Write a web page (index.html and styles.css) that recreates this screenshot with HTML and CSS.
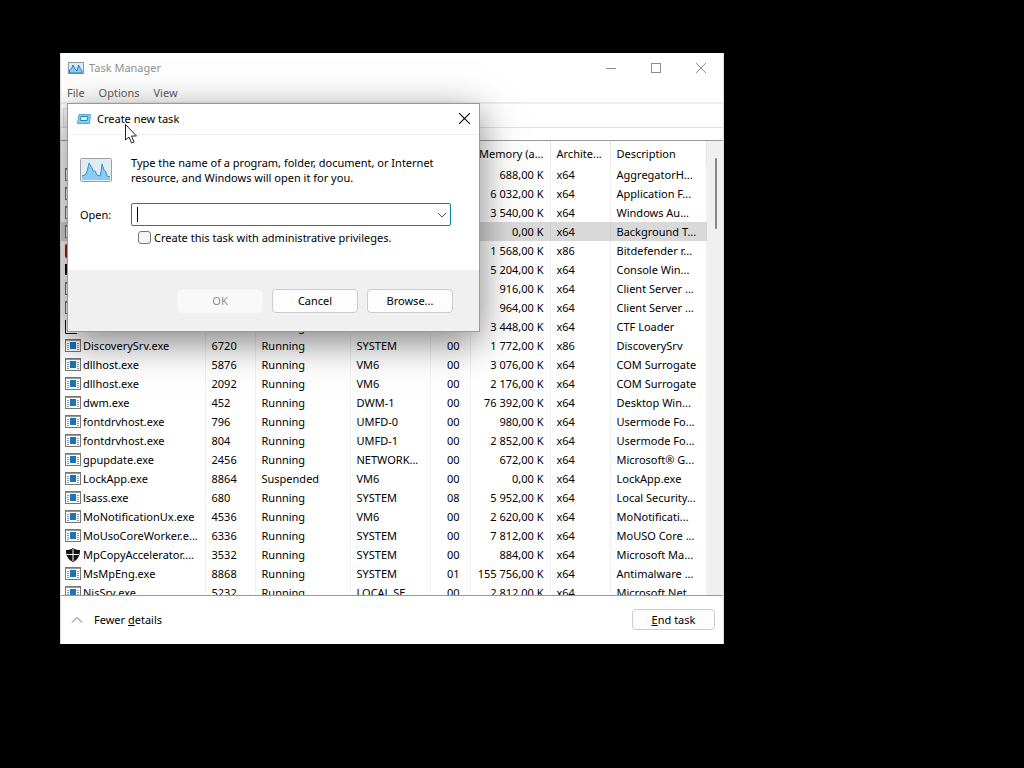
FILE: index.html
```html
<!DOCTYPE html>
<html lang="en">

<head>
	<meta charset="utf-8">
	<title>Task Manager</title>
	<link rel="stylesheet" href="styles.css">
</head>

<body>
	<!-- shared icons -->
	<svg class="defs" aria-hidden="true">
		<symbol id="exe" viewBox="0 0 16 14">
			<rect x="0.5" y="0.5" width="15" height="12" fill="#fff" stroke="#777" />
			<path d="M1 1.5h14" stroke="#999" />
			<path d="M2 4.5h2M2 6.5h2M2 8.5h2M2 10.5h2M12 4.5h2M12 6.5h2M12 8.5h2M12 10.5h2" stroke="#8a9aa8" />
			<rect x="5" y="3" width="6" height="7" fill="#1c74b8" />
		</symbol>
		<symbol id="shield" viewBox="0 0 16 14">
			<path d="M8 0C6 1.500 4 2 1 2C1 8 3 11.500 8 14C13 11.500 15 8 15 2C12 2 10 1.500 8 0z" fill="#111" />
			<path d="M8 1v12M2 6.500h12" stroke="#fff" />
		</symbol>
		<symbol id="graph" viewBox="0 0 32 24">
			<rect x="0.500" y="0.500" width="31" height="23" rx="1" fill="#e2ebf0" stroke="#9aa2a8" />
			<path d="M2 22v-4l3-1 2-3 2-9 3 5 1 3 2 0 2 4 3 1 1-4 1-8 2 6 2 2 1 4 3 1v3z" fill="#8bcbf5" />
			<path d="M2 18l3-1 2-3 2-9 3 5 1 3 2 0 2 4 3 1 1-4 1-8 2 6 2 2 1 4 3 1" fill="none" stroke="#2f92d6" />
		</symbol>
		<symbol id="graph-small" viewBox="0 0 16 12">
			<rect x="0.500" y="0.500" width="15" height="11" fill="#d8ebf6" stroke="#8c9aa3" />
			<path d="M1.500 11V8l2-1 1.500-4 2 4 2 2 1.500-6 1.500 3 2 3v2z" fill="#8bcbf5" stroke="#2580c4" />
		</symbol>
		<symbol id="cross" viewBox="0 0 12 12">
			<path d="M1 1l10 10M11 1L1 11" stroke="currentColor" />
		</symbol>
	</svg>

	<main class="window">
		<header class="titlebar">
			<svg class="app-icon"><use href="#graph-small" /></svg>
			<h1>Task Manager</h1>
			<button class="caption" aria-label="Minimize"><svg viewBox="0 0 12 12"><path d="M1 6.500h10" stroke="currentColor" /></svg></button>
			<button class="caption" aria-label="Maximize"><svg viewBox="0 0 12 12"><rect x="1.500" y="1.500" width="9" height="9" fill="none" stroke="currentColor" /></svg></button>
			<button class="caption" aria-label="Close"><svg><use href="#cross" /></svg></button>
		</header>
		<nav class="menu">
			<button>File</button>
			<button>Options</button>
			<button>View</button>
		</nav>
		<div class="tabs"><div class="tab"></div></div>

		<div class="list">
			<table>
				<colgroup>
					<col class="c-name"><col class="c-pid"><col class="c-status"><col class="c-user">
					<col class="c-cpu"><col class="c-mem"><col class="c-arch"><col>
				</colgroup>
				<thead>
					<tr><th></th><th></th><th></th><th></th><th></th><th>Memory (a...</th><th>Archite...</th><th>Description</th></tr>
				</thead>
				<tbody>
					<tr><td><svg><use href="#exe" /></svg></td><td></td><td></td><td></td><td></td><td>688,00 K</td><td>x64</td><td>AggregatorH...</td></tr>
					<tr><td><svg><use href="#exe" /></svg></td><td></td><td></td><td></td><td></td><td>6 032,00 K</td><td>x64</td><td>Application F...</td></tr>
					<tr><td><svg><use href="#exe" /></svg></td><td></td><td></td><td></td><td></td><td>3 540,00 K</td><td>x64</td><td>Windows Au...</td></tr>
					<tr class="selected"><td><svg><use href="#exe" /></svg></td><td></td><td></td><td></td><td></td><td>0,00 K</td><td>x64</td><td>Background T...</td></tr>
					<tr><td><svg viewBox="0 0 16 14"><rect width="16" height="14" rx="2" fill="#c00d1c" /></svg></td><td></td><td></td><td></td><td></td><td>1 568,00 K</td><td>x86</td><td>Bitdefender r...</td></tr>
					<tr><td><svg viewBox="0 0 16 14"><rect y="1" width="16" height="11" fill="#111" /></svg></td><td></td><td></td><td></td><td></td><td>5 204,00 K</td><td>x64</td><td>Console Win...</td></tr>
					<tr><td><svg><use href="#exe" /></svg></td><td></td><td></td><td></td><td></td><td>916,00 K</td><td>x64</td><td>Client Server ...</td></tr>
					<tr><td><svg><use href="#exe" /></svg></td><td></td><td></td><td></td><td></td><td>964,00 K</td><td>x64</td><td>Client Server ...</td></tr>
					<tr><td><svg viewBox="0 0 16 14"><path d="M0.500 0v13.500H12" fill="none" stroke="#111" /></svg></td><td></td><td>Running</td><td></td><td></td><td>3 448,00 K</td><td>x64</td><td>CTF Loader</td></tr>
					<tr><td><svg><use href="#exe" /></svg>DiscoverySrv.exe</td><td>6720</td><td>Running</td><td>SYSTEM</td><td>00</td><td>1 772,00 K</td><td>x86</td><td>DiscoverySrv</td></tr>
					<tr><td><svg><use href="#exe" /></svg>dllhost.exe</td><td>5876</td><td>Running</td><td>VM6</td><td>00</td><td>3 076,00 K</td><td>x64</td><td>COM Surrogate</td></tr>
					<tr><td><svg><use href="#exe" /></svg>dllhost.exe</td><td>2092</td><td>Running</td><td>VM6</td><td>00</td><td>2 176,00 K</td><td>x64</td><td>COM Surrogate</td></tr>
					<tr><td><svg><use href="#exe" /></svg>dwm.exe</td><td>452</td><td>Running</td><td>DWM-1</td><td>00</td><td>76 392,00 K</td><td>x64</td><td>Desktop Win...</td></tr>
					<tr><td><svg><use href="#exe" /></svg>fontdrvhost.exe</td><td>796</td><td>Running</td><td>UMFD-0</td><td>00</td><td>980,00 K</td><td>x64</td><td>Usermode Fo...</td></tr>
					<tr><td><svg><use href="#exe" /></svg>fontdrvhost.exe</td><td>804</td><td>Running</td><td>UMFD-1</td><td>00</td><td>2 852,00 K</td><td>x64</td><td>Usermode Fo...</td></tr>
					<tr><td><svg><use href="#exe" /></svg>gpupdate.exe</td><td>2456</td><td>Running</td><td>NETWORK...</td><td>00</td><td>672,00 K</td><td>x64</td><td>Microsoft® G...</td></tr>
					<tr><td><svg><use href="#exe" /></svg>LockApp.exe</td><td>8864</td><td>Suspended</td><td>VM6</td><td>00</td><td>0,00 K</td><td>x64</td><td>LockApp.exe</td></tr>
					<tr><td><svg><use href="#exe" /></svg>lsass.exe</td><td>680</td><td>Running</td><td>SYSTEM</td><td>08</td><td>5 952,00 K</td><td>x64</td><td>Local Security...</td></tr>
					<tr><td><svg><use href="#exe" /></svg>MoNotificationUx.exe</td><td>4536</td><td>Running</td><td>VM6</td><td>00</td><td>2 620,00 K</td><td>x64</td><td>MoNotificati...</td></tr>
					<tr><td><svg><use href="#exe" /></svg>MoUsoCoreWorker.e...</td><td>6336</td><td>Running</td><td>SYSTEM</td><td>00</td><td>7 812,00 K</td><td>x64</td><td>MoUSO Core ...</td></tr>
					<tr><td><svg><use href="#shield" /></svg>MpCopyAccelerator....</td><td>3532</td><td>Running</td><td>SYSTEM</td><td>00</td><td>884,00 K</td><td>x64</td><td>Microsoft Ma...</td></tr>
					<tr><td><svg><use href="#exe" /></svg>MsMpEng.exe</td><td>8868</td><td>Running</td><td>SYSTEM</td><td>01</td><td>155 756,00 K</td><td>x64</td><td>Antimalware ...</td></tr>
					<tr><td><svg><use href="#exe" /></svg>NisSrv.exe</td><td>5232</td><td>Running</td><td>LOCAL SE...</td><td>00</td><td>2 812,00 K</td><td>x64</td><td>Microsoft Net...</td></tr>
				</tbody>
			</table>
			<div class="scrollbar"><div class="thumb"></div></div>
		</div>

		<footer class="bottom">
			<button class="fewer">
				<svg viewBox="0 0 12 12"><path d="M1 8.500l5-5 5 5" fill="none" stroke="#666" /></svg>
				<span>Fewer <u>d</u>etails</span>
			</button>
			<button class="btn"><u>E</u>nd task</button>
		</footer>
	</main>

	<form class="dialog" onsubmit="return false">
		<header class="dialog-title">
			<svg viewBox="0 0 14 10"><path d="M2 0.500h11.500l-1 9H0.500z" fill="#7fd0ee" stroke="#58abd0" /><path d="M4 2.500h7l-1 4H3.500z" fill="#e0f6ff" stroke="#2887b5" /></svg>
			<h2>Create new task</h2>
			<button type="button" class="close" aria-label="Close"><svg><use href="#cross" /></svg></button>
		</header>
		<div class="dialog-body">
			<svg class="run-icon"><use href="#graph" /></svg>
			<p>Type the name of a program, folder, document, or Internet<br>resource, and Windows will open it for you.</p>
			<label for="open">Open:</label>
			<div class="combo">
				<input type="text" id="open" name="open">
				<span class="caret"></span>
				<button type="button" aria-label="Show list"><svg viewBox="0 0 12 12"><path d="M2 4l4 4 4-4" fill="none" stroke="#555" /></svg></button>
			</div>
			<div class="admin">
				<input type="checkbox" id="admin" name="admin">
				<label for="admin">Create this task with administrative privileges.</label>
			</div>
		</div>
		<footer class="dialog-buttons">
			<button class="btn" disabled>OK</button>
			<button type="button" class="btn">Cancel</button>
			<button type="button" class="btn">Browse...</button>
		</footer>
	</form>

	<svg class="pointer" viewBox="0 0 12 20"><path d="M0.500 0.500v15.500l3.500-3 2.500 6 2.500-1-2.500-6h5z" fill="#fff" stroke="#222" /></svg>
</body>

</html>
```
FILE: styles.css
```css
* {
	box-sizing: border-box;
}

body {
	margin: 0;
	min-height: 100vh;
	background: #000;
	color: #000;
	font: 11px/15px "Noto Sans", "Open Sans", sans-serif;
	position: relative;
	overflow: hidden;
}

h1, h2, p {
	margin: 0;
	font-size: inherit;
	font-weight: normal;
}

button, input {
	font: inherit;
	color: inherit;
}

button {
	padding: 0;
	border: 0;
	background: none;
}

svg {
	display: block;
	flex: none;
}

.defs {
	position: absolute;
	width: 0;
	height: 0;
}

/* main window */
.window {
	position: absolute;
	left: 60px;
	top: 53px;
	width: 664px;
	background: #fff;
	border: 1px solid #ddd;
	border-width: 0 1px;
}

.titlebar {
	display: flex;
	align-items: center;
	height: 29px;
	padding-left: 7px;
	color: #909090;
}

.titlebar h1 {
	flex: 1;
}

.app-icon {
	width: 16px;
	height: 12px;
	margin-right: 5px;
}

.caption {
	display: flex;
	justify-content: center;
	width: 45px;
}

.caption svg, .close svg {
	width: 12px;
	height: 12px;
}

.menu {
	display: flex;
	align-items: center;
	gap: 14px;
	height: 20px;
	padding-left: 6px;
	color: #606060;
}

.tabs {
	height: 26px;
	border-top: 2px solid #eee;
	border-bottom: 1px solid #e2e2e2;
	padding: 4px 2px 0;
}

.tab {
	width: 60px;
	height: 19px;
	border: 1px solid #ddd;
	background: #f5f5f5;
}

/* process list */
.list {
	display: flex;
	height: 456px;
	margin-top: 12px;
	border: 1px solid #999;
	border-width: 1px 0;
	overflow: hidden;
}

table {
	flex: 1;
	table-layout: fixed;
	border-collapse: collapse;
	width: 0;
	height: 0;
}

.c-name { width: 144px; }
.c-pid { width: 50px; }
.c-status { width: 95px; }
.c-user { width: 80px; }
.c-cpu { width: 40px; }
.c-mem { width: 80px; }
.c-arch { width: 60px; }

th {
	height: 24px;
	padding: 0 6px;
	border-right: 1px solid #e5e5e5;
	font-weight: normal;
	text-align: left;
	white-space: nowrap;
}

td {
	height: 19px;
	padding: 0 6px;
	border-right: 1px solid #f2f2f2;
	white-space: nowrap;
}

td:first-child {
	padding: 0 0 0 4px;
}

td svg {
	display: inline-block;
	width: 16px;
	height: 14px;
	margin-right: 2px;
	vertical-align: -3px;
}

td:nth-child(5), td:nth-child(6), th:nth-child(6) {
	text-align: right;
	padding-left: 0;
}

td:nth-child(5) {
	padding-right: 10px;
}

.selected td {
	background: #d9d9d9;
	border-color: #d0d0d0;
}

.scrollbar {
	width: 16px;
	padding: 17px 6px 0 8px;
	background: #f0f0f0;
}

.thumb {
	height: 71px;
	background: #868686;
	border-radius: 1px;
}

.bottom {
	display: flex;
	align-items: center;
	justify-content: space-between;
	height: 48px;
	padding: 0 8px 1px 10px;
}

.fewer {
	display: flex;
	align-items: center;
	gap: 11px;
}

.fewer svg {
	width: 12px;
	height: 12px;
}

.btn {
	width: 86px;
	height: 24px;
	border: 1px solid #ccc;
	border-radius: 4px;
	background: #fdfdfd;
}

.bottom .btn {
	width: 83px;
	height: 21px;
}

.btn:disabled {
	color: #909090;
	border-color: #f5f5f5;
	background: #f9f9f9;
}

/* run dialog */
.dialog {
	position: absolute;
	left: 67px;
	top: 103px;
	width: 413px;
	background: #fff;
	border: 1px solid #9a9a9a;
	box-shadow: 0 10px 36px rgba(0, 0, 0, 0.5);
}

.dialog-title {
	display: flex;
	align-items: center;
	gap: 6px;
	height: 31px;
	padding: 0 8px 1px 9px;
	border-bottom: 1px solid #eee;
}

.dialog-title h2 {
	flex: 1;
}

.dialog-title svg {
	width: 14px;
	height: 10px;
}

.dialog-title .close svg {
	width: 13px;
	height: 13px;
}

.dialog-body {
	display: grid;
	grid-template-columns: 51px 320px;
	align-items: center;
	height: 135px;
	padding: 20px 12px 0;
	align-content: start;
}

.run-icon {
	width: 32px;
	height: 24px;
}

.combo {
	display: flex;
	position: relative;
	height: 23px;
	margin-top: 18px;
	border: 1px solid #1a7ba6;
	border-radius: 2px;
}

.dialog-body > label {
	margin-top: 18px;
}

.combo input {
	flex: 1;
	min-width: 0;
	padding: 0 5px;
	border: 0;
	outline: 0;
	background: none;
}

.caret {
	position: absolute;
	left: 5px;
	top: 3px;
	width: 1px;
	height: 15px;
	background: #000;
}

.combo button {
	padding: 0 2px;
}

.combo button svg {
	width: 12px;
	height: 12px;
}

.admin {
	grid-column: 2;
	display: flex;
	align-items: center;
	gap: 3px;
	margin-top: 4px;
	padding-left: 7px;
}

.admin input {
	appearance: none;
	width: 13px;
	height: 13px;
	margin: 0;
	border: 1px solid #777;
	border-radius: 3px;
	background: #f5f5f5;
}

.dialog-buttons {
	display: flex;
	justify-content: flex-end;
	align-items: center;
	gap: 9px;
	height: 61px;
	padding-right: 26px;
	background: #f0f0f0;
}

/* mouse pointer */
.pointer {
	position: absolute;
	left: 125px;
	top: 124px;
	width: 12px;
	height: 20px;
}
```
